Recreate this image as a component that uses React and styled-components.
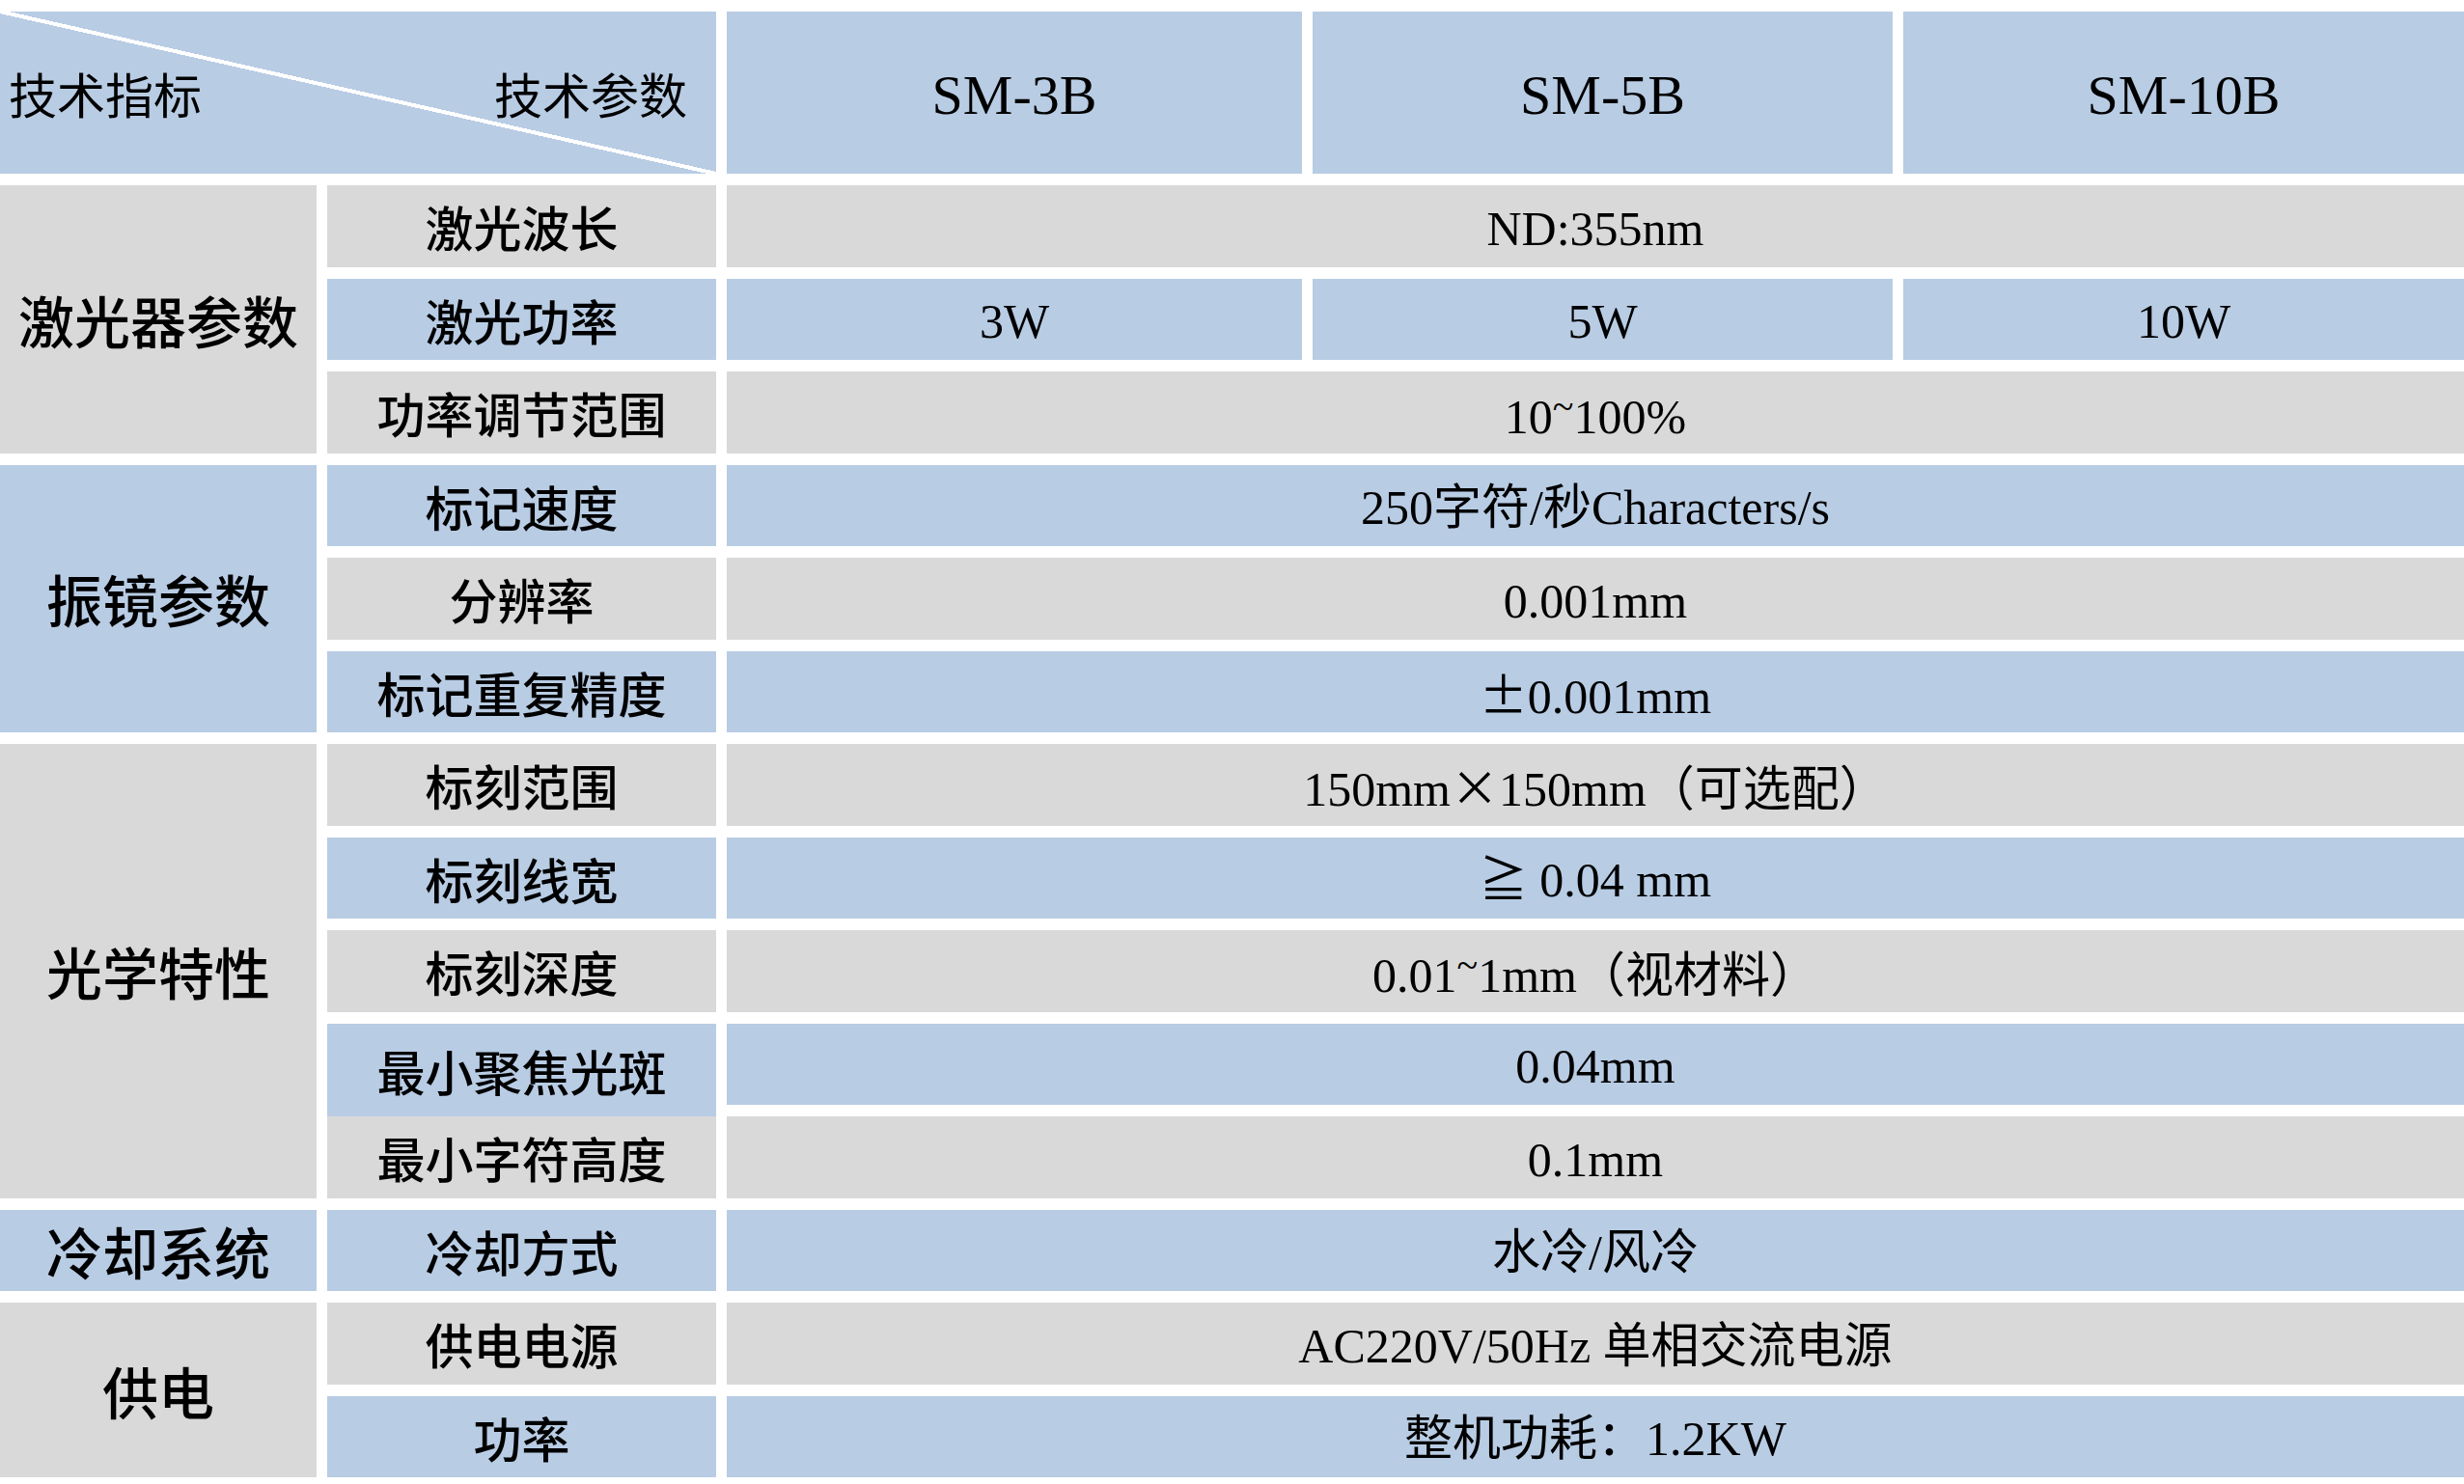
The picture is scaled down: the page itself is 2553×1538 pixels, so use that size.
import styled, { createGlobalStyle } from 'styled-components';

const BLUE = '#B8CCE4';
const GRAY = '#D9D9D9';

const GlobalStyle = createGlobalStyle`
  html,
  body {
    margin: 0;
    padding: 0;
    background: #ffffff;
  }

  body {
    font-family: 'Liberation Serif', 'Noto Sans CJK SC', serif;
    color: #000000;
  }
`;

const Table = styled.div`
  width: 2553px;
  padding-top: 12px;

  display: grid;
  grid-template-columns: 328px 403px 596px 601px 1fr;
  grid-template-rows: 168px repeat(14, 84.5px);
  column-gap: 11px;
  row-gap: 12px;
`;

const Cell = styled.div`
  grid-row: ${({ $row, $rowSpan = 1 }) => `${$row} / span ${$rowSpan}`};
  grid-column: ${({ $col, $colSpan = 1 }) => `${$col} / span ${$colSpan}`};

  display: flex;
  align-items: center;
  justify-content: center;

  background: ${({ $tone }) => ($tone === 'blue' ? BLUE : GRAY)};
  font-size: ${({ $size = 50 }) => `${$size}px`};
  line-height: 1;
  white-space: nowrap;
`;

// 数值单元格，西文略微下沉
const ValueCell = styled(Cell)`
  padding-top: 5px;
`;

const Text = styled.span`
  display: inline-block;
`;

// 表头左上角：斜线分隔
const CornerCell = styled.div`
  grid-row: 1;
  grid-column: 1 / span 2;

  display: flex;
  align-items: center;
  justify-content: space-between;
  padding: 0 30px 0 9px;

  background: linear-gradient(
    to top right,
    ${BLUE} calc(50% - 2px),
    #ffffff calc(50% - 2px),
    #ffffff calc(50% + 2px),
    ${BLUE} calc(50% + 2px)
  );
  font-family: 'Noto Sans CJK SC', sans-serif;
  font-size: 50px;
  line-height: 1;
`;

const GroupCell = styled(Cell)`
  font-family: 'Noto Sans CJK SC', sans-serif;
  font-weight: 500;
`;

const LabelCell = styled(Cell)`
  font-family: 'Noto Sans CJK SC', sans-serif;
  font-weight: 500;
  margin-bottom: ${({ $bleed }) => ($bleed ? '-12px' : '0')};
`;

const Wide = styled.span`
  font-family: 'Noto Sans CJK SC', sans-serif;
`;

// 波浪号偏上
const Tilde = styled.span`
  vertical-align: 0.34em;
  font-size: 0.8em;
`;

const models = ['SM-3B', 'SM-5B', 'SM-10B'];

const groups = [
  { name: '激光器参数', start: 0, span: 3, tone: 'gray' },
  { name: '振镜参数', start: 3, span: 3, tone: 'blue' },
  { name: '光学特性', start: 6, span: 5, tone: 'gray' },
  { name: '冷却系统', start: 11, span: 1, tone: 'blue' },
  { name: '供电', start: 12, span: 2, tone: 'gray' },
];

const rows = [
  { label: '激光波长', value: 'ND:355nm' },
  { label: '激光功率', values: ['3W', '5W', '10W'] },
  {
    label: '功率调节范围',
    value: (
      <>
        10<Tilde>~</Tilde>100%
      </>
    ),
  },
  { label: '标记速度', value: '250字符/秒Characters/s' },
  { label: '分辨率', value: '0.001mm' },
  {
    label: '标记重复精度',
    value: (
      <>
        <Wide>±</Wide>0.001mm
      </>
    ),
  },
  {
    label: '标刻范围',
    value: (
      <>
        150mm<Wide>×</Wide>150mm（可选配）
      </>
    ),
  },
  { label: '标刻线宽', value: '≧ 0.04 mm' },
  {
    label: '标刻深度',
    value: (
      <>
        0.01<Tilde>~</Tilde>1mm（视材料）
      </>
    ),
  },
  { label: '最小聚焦光斑', value: '0.04mm', bleed: true },
  { label: '最小字符高度', value: '0.1mm' },
  { label: '冷却方式', value: '水冷/风冷' },
  { label: '供电电源', value: 'AC220V/50Hz 单相交流电源' },
  { label: '功率', value: '整机功耗：1.2KW' },
];

const App = () => {
  return (
    <>
      <GlobalStyle />
      <Table>
        <CornerCell>
          <span>技术指标</span>
          <span>技术参数</span>
        </CornerCell>
        {models.map((model, i) => (
          <ValueCell key={model} $row={1} $col={3 + i} $tone="blue" $size={58}>
            {model}
          </ValueCell>
        ))}

        {groups.map((group) => (
          <GroupCell
            key={group.name}
            $row={group.start + 2}
            $rowSpan={group.span}
            $col={1}
            $tone={group.tone}
            $size={58}
          >
            {group.name}
          </GroupCell>
        ))}

        {rows.map((row, i) => {
          const tone = i % 2 ? 'blue' : 'gray'; // 灰蓝交替
          return [
            <LabelCell key={`l${i}`} $row={i + 2} $col={2} $tone={tone} $bleed={row.bleed}>
              {row.label}
            </LabelCell>,
            row.values ? (
              row.values.map((v, j) => (
                <ValueCell key={`v${i}-${j}`} $row={i + 2} $col={3 + j} $tone={tone}>
                  {v}
                </ValueCell>
              ))
            ) : (
              <ValueCell key={`v${i}`} $row={i + 2} $col={3} $colSpan={3} $tone={tone}>
                <Text>{row.value}</Text>
              </ValueCell>
            ),
          ];
        })}
      </Table>
    </>
  );
};

export default App;
